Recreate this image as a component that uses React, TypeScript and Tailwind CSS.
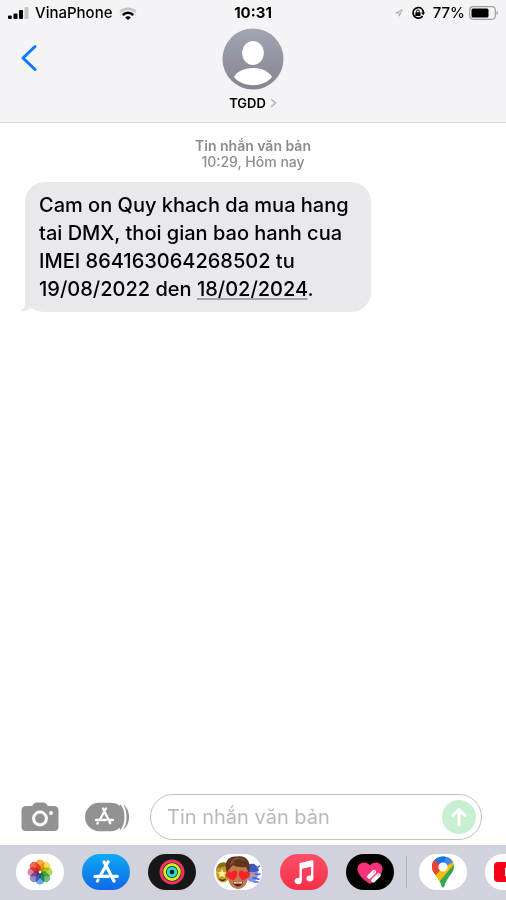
import { useState } from "react";
import type { ReactNode } from "react";

interface DrawerApp {
  id: string;
  label: string;
  className: string;
  icon: ReactNode;
}

function AppStoreGlyph({ className }: { className: string }) {
  return (
    <svg viewBox="0 0 28 28" className={className} fill="none" stroke="currentColor" strokeWidth="3.2" strokeLinecap="round">
      <path d="M12 3.800 22 23" />
      <path d="M16.200 3.800 8 18.200" />
      <path d="M3 18.400h13.400M21.600 18.400H25.200" />
      <path d="M6 22 5.400 23" />
    </svg>
  );
}

function PhotosIcon() {
  const petals = ["#f79a2a", "#f2dc2c", "#a9d046", "#4fb56c", "#4f9fdc", "#7f78cc", "#dd6d9c", "#ee4a38"];
  return (
    <svg viewBox="0 0 28 28" className="size-7">
      {petals.map((color, idx) => (
        <rect
          key={color}
          x="9.6"
          y="1.4"
          width="8.8"
          height="12"
          rx="4.4"
          fill={color}
          opacity="0.85"
          transform={`rotate(${idx * 45} 14 14)`}
          style={{ mixBlendMode: "multiply" }}
        />
      ))}
      <circle cx="14" cy="14" r="1.200" fill="#fff" />
    </svg>
  );
}

function ActivityIcon() {
  return (
    <svg viewBox="0 0 28 28" className="size-7" fill="none" strokeWidth="3">
      <circle cx="14" cy="14" r="11" stroke="#f0325c" />
      <circle cx="14" cy="14" r="7.400" stroke="#c6f02c" />
      <circle cx="14" cy="14" r="3.800" stroke="#2fd8d2" />
    </svg>
  );
}

function MemojiIcon() {
  return (
    <svg viewBox="0 0 48 36" className="h-9 w-12">
      {/* left friend */}
      <ellipse cx="9" cy="20" rx="6.800" ry="8.500" fill="#c8971b" />
      <path d="M2 18C2 6 14 6 16 13l-3-1-9 2z" fill="#8a6a1c" />
      <path d="m8 15 1.400 3 3.200.4-2.200 2 .6 3-3-1.500-2.800 1.500.6-3-2.200-2 3-.4z" fill="#fff3a8" />
      <path d="M5 24.500c2 1.500 5 1.500 7 0-1 3.600-6 3.600-7 0z" fill="#4b2c10" />
      {/* right friend */}
      <ellipse cx="38" cy="20" rx="6" ry="8" fill="#7d98e6" />
      <path d="M32 17c0-10 12-9 13 0l-4 1-8 0z" fill="#4256bd" />
      <path d="M41 20c3 0 4 1 5 0M39 24c3-1 4 2 6 1M40 28l4 0M43 14l2.500-2" stroke="#4a62e6" strokeWidth="1.600" fill="none" strokeLinecap="round" />
      <path d="M36 20h5v2.500h-5z" fill="#dd9a52" />
      {/* front face */}
      <ellipse cx="13.600" cy="21" rx="1.800" ry="3" fill="#a9653c" />
      <ellipse cx="34" cy="21" rx="1.800" ry="3" fill="#a9653c" />
      <path d="M14 16c0-8 20-8 20 0v7c0 7-5 12-10 12s-10-5-10-12z" fill="#c07a4c" />
      <path d="M13 19C9 7 15 1.500 23 2.500 33 1 38 9 35 19c-1-2-2-4-3-6-5 .5-10 0-13-2-2 2-4 4-6 8z" fill="#5f351d" />
      <path d="M17 8c3-4 9-5 13-2M16 11c1-2 3-3 5-3" stroke="#8d5732" strokeWidth="1.200" fill="none" />
      <path d="M19.500 26.500c-5-2-7.500-4.500-7.200-7.300.6-2.600 4-2.700 5.200-.4 1-2.800 4.800-3 5.600-.4.600 2.800-.8 5.400-3.600 8.100z" fill="#fa2029" />
      <path d="M28.500 26.500c5-2 7.500-4.500 7.200-7.300-.6-2.600-4-2.700-5.200-.4-1-2.800-4.800-3-5.600-.4-.6 2.800.8 5.400 3.600 8.100z" fill="#fa2029" />
      <path d="M19 27.500c3 1 7 1 10 0-.5 3.500-2.500 5-5 5s-4.500-1.500-5-5z" fill="#6b1d16" />
      <path d="M19.600 27.800c3 .8 6 .8 8.800 0l-.6 1.700h-7.600z" fill="#fff" />
    </svg>
  );
}

function MusicIcon() {
  return (
    <svg viewBox="0 0 24 28" className="h-7 w-6" fill="#fff">
      <path d="M7.500 5 20 2.200q1.400-.2 1.400 1V20.500a3.500 3 0 1 1-2.400-2.900V8.800L9.900 10.800v12.200a3.700 3.200 0 1 1-2.400-3z" />
    </svg>
  );
}

function DigitalTouchIcon() {
  return (
    <svg viewBox="0 0 28 28" className="size-7">
      <path d="M14 26C6 21 1.500 16 1.500 10.800 1.500 3.800 10.500 2.300 14 7.500c3.500-5.200 12.500-3.700 12.500 3.300C26.500 16 22 21 14 26z" fill="#f5327b" />
      <path d="m13.200 18.800 4.800-4.800M17.200 22.600l5.400-5.400" stroke="#fff" strokeWidth="4.200" strokeLinecap="round" />
      <path d="m17.600 14.400.8-.8M22.200 17.600l.8-.8" stroke="#f5a5c4" strokeWidth="1.600" strokeLinecap="round" />
    </svg>
  );
}

function MapsIcon() {
  return (
    <svg viewBox="0 0 24 32" className="h-8 w-6">
      <defs>
        <clipPath id="map-pin">
          <path d="M12 31.500c-.9 0-1.300-.7-1.600-1.700C9.200 25.500 7.200 22.500 4.800 19.200 2.800 16.500 1 14.200 1 11 1 4.500 6 .5 12 .5S23 4.500 23 11c0 3.200-1.800 5.500-3.800 8.200-2.400 3.300-4.400 6.300-5.600 10.600-.3 1-.7 1.700-1.600 1.700z" />
        </clipPath>
      </defs>
      <g clipPath="url(#map-pin)">
        <path d="M0 0h24v32H0z" fill="#34a853" />
        <path d="M2 22 12 11 24-3v10L8 26z" fill="#fbbc04" />
        <path d="M12 11 3.500 3.500-1 6v16l5-2z" fill="#ea4335" />
        <path d="M3.500 20 15.500 14 12 11-1 12v12z" fill="#fbbc04" />
        <path d="M-1 13V3l4.500.5L12 11l-6.500 7.500L0 20z" fill="#ea4335" />
        <path d="M3.300 3.800 8 0h7l-.5 8L12 11z" fill="#1a73e8" />
        <path d="M15 0h9v5l-12 7z" fill="#4285f4" />
      </g>
      <circle cx="12" cy="11" r="4.600" fill="#fff" />
    </svg>
  );
}

function YoutubeIcon() {
  return (
    <svg viewBox="0 0 30 22" className="h-[22px] w-[30px]">
      <rect x="0" y="1" width="30" height="20" rx="4" fill="#f60018" />
      <path d="M11 6.500v9l8-4.500z" fill="#fff" />
    </svg>
  );
}

const builtIn: DrawerApp[] = [
  { id: "photos", label: "Photos", className: "bg-white", icon: <PhotosIcon /> },
  { id: "store", label: "App Store", className: "bg-gradient-to-b from-[#12a8f5] to-[#1667e5] text-white", icon: <AppStoreGlyph className="size-7" /> },
  { id: "activity", label: "Activity", className: "bg-[#17171a]", icon: <ActivityIcon /> },
  { id: "memoji", label: "Memoji", className: "bg-white", icon: <MemojiIcon /> },
  { id: "music", label: "Music", className: "bg-gradient-to-b from-[#fb5068] to-[#f72c48]", icon: <MusicIcon /> },
  { id: "touch", label: "Digital Touch", className: "bg-black", icon: <DigitalTouchIcon /> },
];

const installed: DrawerApp[] = [
  { id: "maps", label: "Google Maps", className: "bg-white", icon: <MapsIcon /> },
  { id: "youtube", label: "YouTube", className: "bg-white", icon: <YoutubeIcon /> },
];

function DrawerButton({ app }: { app: DrawerApp }) {
  return (
    <button
      type="button"
      aria-label={app.label}
      className={`flex h-9 w-12 shrink-0 items-center justify-center overflow-hidden rounded-full ${app.className}`}
    >
      {app.icon}
    </button>
  );
}

function StatusBar() {
  return (
    <div className="grid h-[26px] grid-cols-[1fr_auto_1fr] items-center px-2 text-[15px]">
      <div className="flex items-center gap-1.5">
        <svg viewBox="0 0 21 12" className="h-3 w-[21px]">
          <rect x="0" y="8.500" width="3.800" height="3.500" rx="1" />
          <rect x="5.500" y="6.500" width="4" height="5.500" rx="1" />
          <rect x="11" y="3" width="4" height="9" rx="1" />
          <rect x="16.500" y="0" width="4" height="12" rx="1" fill="#c4c4c6" />
        </svg>
        <span className="font-medium">VinaPhone</span>
        <svg viewBox="0 0 18 13" className="h-[13px] w-[18px]" fill="none">
          <path d="M1.200 5C5.500.6 12.500.6 16.800 5" stroke="#c4c4c6" strokeWidth="2.400" />
          <path d="M3.800 8c2.900-3 7.500-3 10.400 0" stroke="#000" strokeWidth="2.600" />
          <path d="M9 13 6.200 10.400c1.600-1.400 4-1.400 5.600 0z" fill="#000" />
        </svg>
      </div>
      <span className="font-bold">10:31</span>
      <div className="flex items-center justify-end gap-2">
        <svg viewBox="0 0 8 8" className="size-2" fill="none" stroke="#aaaaad" strokeWidth="1">
          <path d="M.8 3.900 7.200.8 4.200 7.200V3.900z" />
        </svg>
        <svg viewBox="0 0 14 14" className="size-3.5" fill="none" stroke="#000">
          <path d="M10.800 2.800A5.300 5.300 0 1 0 11.600 10M11 3a5.300 5.300 0 0 1 1.300 4" strokeWidth="1.700" />
          <path d="M10 6.500h4L12.200 9.300z" fill="#000" stroke="none" />
          <rect x="4.300" y="6.300" width="5.200" height="3.700" rx=".6" fill="#000" stroke="none" />
          <path d="M5.500 6.600V5.400a1.400 1.400 0 0 1 2.800 0v1.200" />
        </svg>
        <div className="flex items-center gap-1">
          <span className="font-medium">77%</span>
          <svg viewBox="0 0 29 14" className="h-3.5 w-[29px]">
            <rect x=".7" y=".7" width="25.600" height="12.600" rx="3.500" fill="none" stroke="#a0a0a2" strokeWidth="1.200" />
            <rect x="2.500" y="2.500" width="17" height="9" rx="1.500" />
            <path d="M27.600 5v4q1.300-.6 1.300-2t-1.300-2z" fill="#8e8e91" />
          </svg>
        </div>
      </div>
    </div>
  );
}

function ChatHeader() {
  return (
    <div className="grid grid-cols-[1fr_auto_1fr] items-start pt-0.5 pb-2.5">
      <button type="button" aria-label="Back" className="mt-4 ml-5 w-[18px]">
        <svg viewBox="0 0 18 28" className="h-7 w-[18px]" fill="none" stroke="#087bfe" strokeWidth="3" strokeLinecap="round" strokeLinejoin="round">
          <path d="M15 2.500 3 14l12 11.500" />
        </svg>
      </button>
      <button type="button" className="flex flex-col items-center gap-1">
        <svg viewBox="0 0 62 62" className="size-[62px]">
          <defs>
            <linearGradient id="avatar" x1="0" y1="0" x2="0" y2="1">
              <stop offset="0" stopColor="#a2a6b2" />
              <stop offset="1" stopColor="#83858f" />
            </linearGradient>
          </defs>
          <circle cx="31" cy="31" r="30.500" fill="url(#avatar)" />
          <ellipse cx="31" cy="25" rx="10.800" ry="12" fill="#fff" />
          <path d="M12 49c3-5.500 10-9 19-9s16 3.500 19 9c-4 5-11 8.200-19 8.200S16 54 12 49z" fill="#fff" />
        </svg>
        <span className="flex items-center gap-1 text-[13px] leading-[18px] font-semibold">
          TGDD
          <svg viewBox="0 0 7 10" className="h-2.5 w-[7px]" fill="none" stroke="#b4b4b8" strokeWidth="1.500">
            <path d="m1 1 4.500 4L1 9" />
          </svg>
        </span>
      </button>
    </div>
  );
}

function Composer() {
  const [message, setMessage] = useState("");

  return (
    <form className="flex items-center pt-2 pr-6 pb-[5px] pl-[21px]" onSubmit={(e) => e.preventDefault()}>
      <button type="button" aria-label="Camera" className="mr-[25px] shrink-0">
        <svg viewBox="0 0 38 30" className="h-[30px] w-[38px]">
          <path d="M5 4h6l2-2.500Q14 .5 15.500.5h7q1.500 0 2.500 1L27 4h6q4.500 0 4.500 4.500v16q0 4.500-4.500 4.500H5Q.5 29 .5 24.500v-16Q.5 4 5 4z" fill="#929295" />
          <circle cx="19" cy="16.500" r="6.400" fill="none" stroke="#fff" strokeWidth="3" />
          <circle cx="30" cy="11" r="2" fill="#fff" />
        </svg>
      </button>
      <button type="button" aria-label="Apps" className="mr-5 shrink-0">
        <svg viewBox="0 0 46 30" className="h-[30px] w-[46px]">
          <path d="M36 1.200C48 3.500 48 26.500 36 28.800z" fill="#929295" />
          <rect x="1" y=".8" width="40" height="28.400" rx="14.200" fill="#929295" />
          <path d="M35.500 .2C43.500 6 43.500 24 35.500 29.800" fill="none" stroke="#fff" strokeWidth="2" />
          <g fill="none" stroke="#fff" strokeWidth="2.300" strokeLinecap="round">
            <path d="m19 6.500 7.200 14.800M22 6.500l-6.200 11.300M12 18h9.800M25.500 18H29M13.800 21l-.3.600" />
          </g>
        </svg>
      </button>
      <div className="flex h-[46px] min-w-0 flex-1 items-center rounded-full border border-[#c0c0c4] pr-[5px] pl-4">
        <input
          type="text"
          aria-label="Tin nhắn văn bản"
          placeholder="Tin nhắn văn bản"
          value={message}
          onChange={(e) => setMessage(e.target.value)}
          className="min-w-0 flex-1 bg-transparent text-xl outline-none placeholder:text-[#b9b9bc]"
        />
        <button type="submit" aria-label="Send" className="flex size-[34px] shrink-0 items-center justify-center rounded-full bg-[#c8efd1]">
          <svg viewBox="0 0 20 20" className="size-5" fill="none" stroke="#fff" strokeWidth="3" strokeLinecap="round" strokeLinejoin="round">
            <path d="M10 18V2.500M4 8.500l6-6 6 6" />
          </svg>
        </button>
      </div>
    </form>
  );
}

export default function App() {
  return (
    <div className="flex min-h-screen flex-col bg-white font-['Inter','Liberation_Sans',sans-serif] text-black">
      <header className="border-b border-[#d9d9db] bg-[#f4f3f5]">
        <StatusBar />
        <ChatHeader />
      </header>

      <main className="flex-1 px-[25px] pt-[15px]">
        <p className="text-center text-sm leading-4 text-[#8c8c90]">
          <span className="font-semibold">Tin nhắn văn bản</span>
          <br />
          <span className="font-medium">10:29, Hôm nay</span>
        </p>

        <div className="relative mt-3 w-fit max-w-[346px] rounded-[20px] bg-[#e9e8ed] px-3.5 py-[9px] text-xl leading-7 font-medium">
          {/* bubble tail */}
          <svg viewBox="0 0 20 20" className="absolute bottom-0 -left-[5px] size-5" fill="#e9e8ed">
            <path d="M5 0v12c0 3-2 5.500-5 7.500 4.500 0 8.500-1 11-3.500l7 3.500V0z" />
          </svg>
          <p className="relative">
            Cam on Quy khach da mua hang tai DMX, thoi gian bao hanh cua IMEI 864163064268502 tu 19/08/2022 den{" "}
            <a href="#date" className="underline decoration-[#a5a5a9] decoration-2 underline-offset-2">
              18/02/2024
            </a>
            .
          </p>
        </div>
      </main>

      <footer>
        <Composer />
        <nav aria-label="Apps" className="flex items-center gap-[18px] overflow-hidden bg-[#d1d3dc] pt-[9px] pb-2.5 pl-4">
          {builtIn.map((app) => (
            <DrawerButton key={app.id} app={app} />
          ))}
          <div className="-mx-1.5 h-8 w-px shrink-0 bg-[#b5b7c0]" />
          {installed.map((app) => (
            <DrawerButton key={app.id} app={app} />
          ))}
        </nav>
      </footer>
    </div>
  );
}
